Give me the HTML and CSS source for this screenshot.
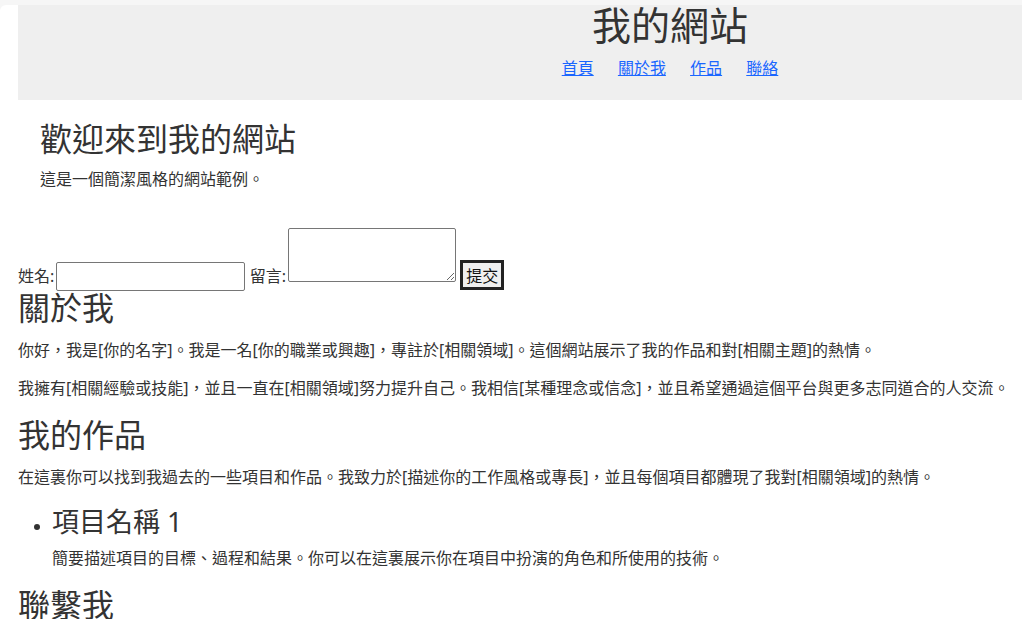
FILE: index.html
```
<!DOCTYPE html>
<html lang="zh-Hant">
<head>
    <meta charset="UTF-8">
    <meta name="viewport" content="width=device-width, initial-scale=1.0">
    <title>我的網站</title>
    <link rel="stylesheet" href="styles.css">
</head>
<body>
    <div class="page">
        <header class="site-header">
            <h1>我的網站</h1>
            <nav>
                <a href="#">首頁</a>
                <a href="#about">關於我</a>
                <a href="#works">作品</a>
                <a href="#contact">聯絡</a>
            </nav>
        </header>

        <section class="intro">
            <h2>歡迎來到我的網站</h2>
            <p>這是一個簡潔風格的網站範例。</p>
        </section>

        <form class="message-form">
            <label for="name">姓名:</label> <input type="text" id="name">
            <label for="msg">留言:</label> <textarea id="msg"></textarea>
            <button type="button">提交</button>
        </form>

        <section class="block block-first" id="about">
            <h2>關於我</h2>
            <p>你好，我是[你的名字]。我是一名[你的職業或興趣]，專註於[相關領域]。這個網站展示了我的作品和對[相關主題]的熱情。</p>
            <p>我擁有[相關經驗或技能]，並且一直在[相關領域]努力提升自己。我相信[某種理念或信念]，並且希望通過這個平台與更多志同道合的人交流。</p>
        </section>

        <section class="block" id="works">
            <h2>我的作品</h2>
            <p>在這裏你可以找到我過去的一些項目和作品。我致力於[描述你的工作風格或專長]，並且每個項目都體現了我對[相關領域]的熱情。</p>
            <ul class="projects">
                <li>
                    <h3>項目名稱 1</h3>
                    <p>簡要描述項目的目標、過程和結果。你可以在這裏展示你在項目中扮演的角色和所使用的技術。</p>
                </li>
            </ul>
        </section>

        <section class="block" id="contact">
            <h2>聯繫我</h2>
        </section>
    </div>
</body>
</html>
```

FILE: styles.css
```
:root {
    --text-color: #333;
    --header-bg: #efefef;
    --link-color: #1a66ff;
}

html, body {
    height: 100%;
}

body {
    margin: 0;
    background-color: #f6f6f6;
    font-family: 'Noto Sans', 'Noto Sans CJK TC', sans-serif;
    color: var(--text-color);
    overflow: hidden;
}

.page {
    margin-top: 5px;
    min-height: 100%;
    padding-left: 18px;
    background-color: #fff;
    border-top-left-radius: 6px;
}

.site-header {
    width: 1304px;
    padding: 0 0 21px;
    background-color: var(--header-bg);
    text-align: center;
}

.site-header h1 {
    margin: 0;
    font-size: 39px;
    font-weight: normal;
    line-height: 40px;
}

.site-header nav {
    margin-top: 12px;
    line-height: 22px;
}

.site-header nav a {
    margin: 0 10px;
    color: var(--link-color);
    font-size: 16px;
}

h2 {
    margin: 0 0 17px;
    font-size: 32px;
    font-weight: normal;
    line-height: 28px;
}

p {
    margin: 0 0 16px;
    font-size: 16px;
    line-height: 22px;
}

.intro {
    padding: 25px 22px 22px;
}

.intro h2 {
    margin-bottom: 15px;
}

.message-form {
    font-size: 16px;
    line-height: 22px;
}

.message-form label {
    margin-right: -2px;
}

.message-form input,
.message-form textarea,
.message-form button {
    box-sizing: border-box;
    margin: 0;
    font-family: inherit;
    font-size: 16px;
}

.message-form input {
    width: 189px;
    height: 29px;
    border: 1px solid #767676;
    border-radius: 2px;
}

.message-form textarea {
    width: 168px;
    height: 54px;
    border: 1px solid #767676;
    border-radius: 2px;
    vertical-align: baseline;
}

.message-form button {
    width: 44px;
    height: 30px;
    padding: 0;
    border: 3px solid #222;
    background-color: #efefef;
    color: #111;
}

.block {
    margin-top: 22px;
}

.block-first {
    margin-top: 3px;
}

.projects {
    margin: 0;
    padding-left: 34px;
}

.projects h3 {
    margin: 21px 0 12px;
    font-size: 27px;
    font-weight: normal;
    line-height: 26px;
}
```
